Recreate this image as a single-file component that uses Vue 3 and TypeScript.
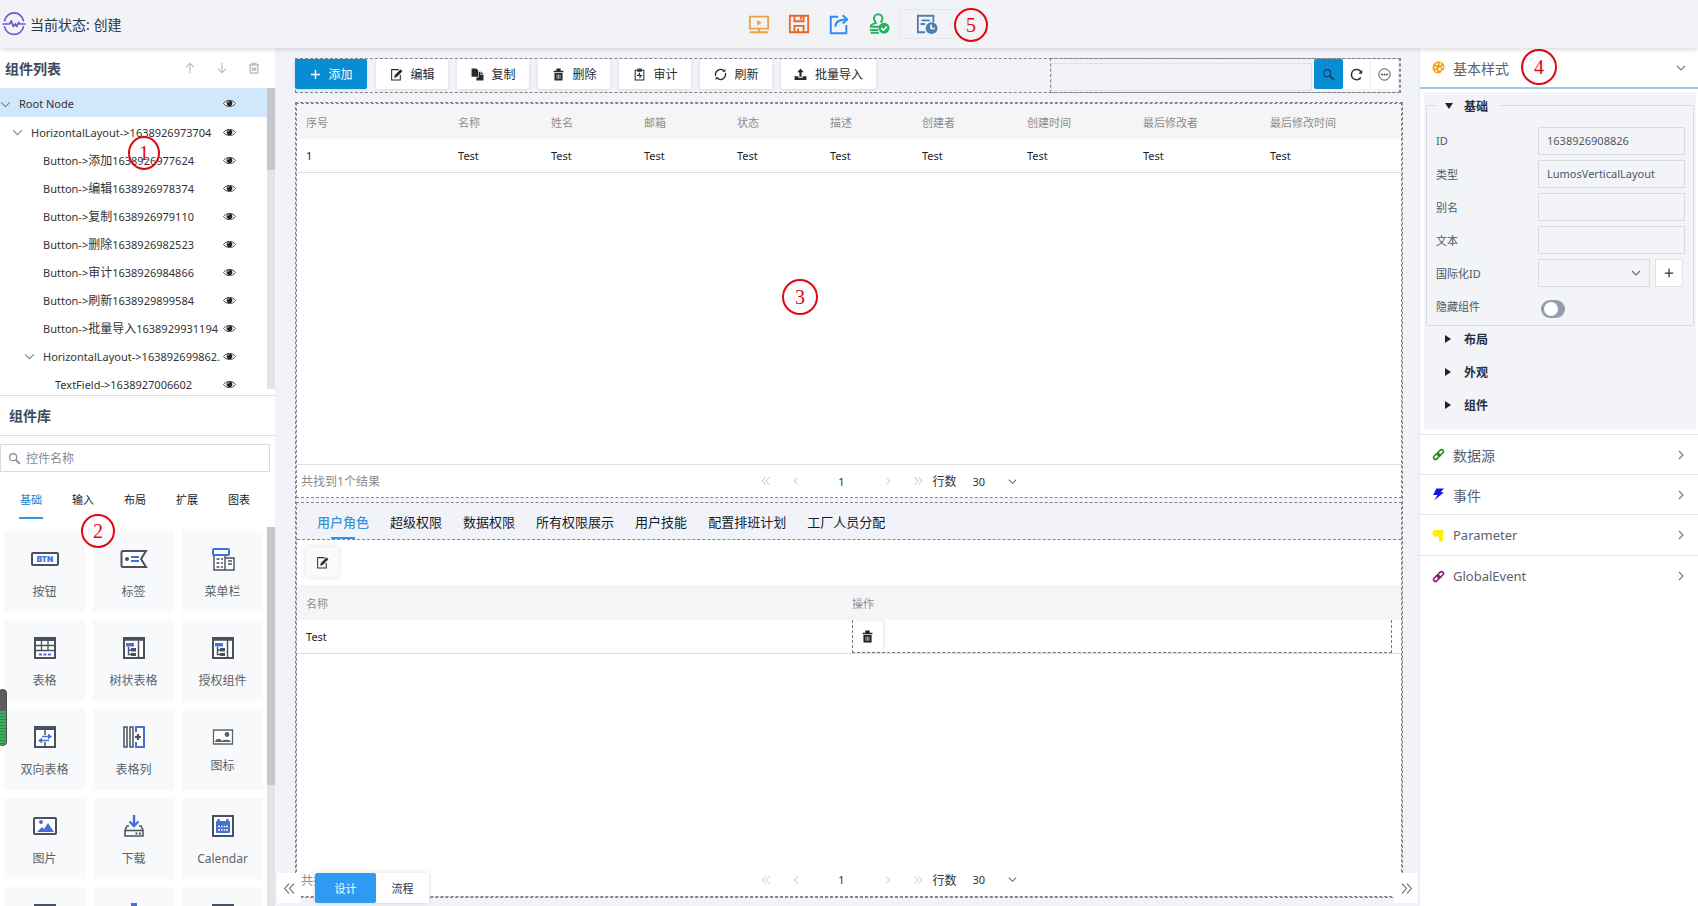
<script setup lang="ts">
import { h, ref } from 'vue'

interface TreeNode { level: number; kind: string; name?: string; id?: string; open?: boolean }
interface Tile { icon: string; label: string; small?: boolean }

const dark = '#4a5060'
const blue = '#4470d8'

const shapes: Record<string, string> = {
  logo: `<g fill="none" stroke="#7157cc" stroke-width="1.7" stroke-linecap="round" stroke-linejoin="round"><path d="M2.6 8.6a9.6 9.6 0 0 1 18.8 0M2.6 14.8a9.6 9.6 0 0 0 18.8 0"/><path d="M1 12h6.5l1.8-3 2 5.500 2-2.500 1.500 2.500 1.800-4 1.200 1.500h5.200"/></g>`,
  play: `<g fill="none" stroke="#eda23d" stroke-width="2"><path d="M2 4h20v13H2zM12 17v4M2 21h20"/></g><path d="M10 7.500l5 3.200-5 3.200z" fill="#eda23d"/>`,
  save: `<g fill="none" stroke="#e8672a" stroke-width="2"><path d="M2 3h20v18H2zM7 3v6h10V3M7 21v-7h10v7M14 4v3M11 17v4"/></g>`,
  share: `<g fill="none" stroke="#2b8cf4" stroke-width="2.100"><path d="M11 4H3v18h17v-9"/><path d="M8 15c0-5 4-8 12-8M16 2.500L21 7l-5 4.500" stroke-linejoin="round"/></g>`,
  stamp: `<g fill="none" stroke="#25b562" stroke-width="2.200"><path d="M13 15H3c0-3 3-3.500 5.500-4C8.500 9 6.500 8.500 6.500 6a4.600 4.600 0 0 1 9.200 0c0 2-1.200 3-1.600 4.500M2 18.500h9M3 21.500h9"/></g><circle cx="17.500" cy="16.500" r="6" fill="#25b562"/><path d="M14.500 16.500l2.200 2.200 4-4" fill="none" stroke="#fff" stroke-width="1.600"/>`,
  history: `<g fill="none" stroke="#4d7fb2" stroke-width="2"><path d="M10 21H2V3h17v7M6 8h9M5 12h5"/></g><circle cx="17" cy="16.500" r="6.500" fill="#4d7fb2"/><path d="M16.500 12.500v4.500h4" fill="none" stroke="#fff" stroke-width="1.700"/>`,
  up: `<path d="M12 21V4M5 11l7-7 7 7" fill="none" stroke="currentColor" stroke-width="2"/>`,
  down: `<path d="M12 3v17M5 13l7 7 7-7" fill="none" stroke="currentColor" stroke-width="2"/>`,
  trash: `<path d="M3 5h18v3H3zM8 1h8v4H8zM4.500 9h15v14h-15z" fill="currentColor"/><path d="M9.200 12v8M12 12v8M14.800 12v8" stroke="#fff" stroke-width="1.200"/>`,
  trashLine: `<path d="M2 6h20M8 6V3h8v3M4.500 7v15h15V7M9 11v7M15 11v7M12 11v7" fill="none" stroke="currentColor" stroke-width="2.800"/>`,
  chevronDown: `<path d="M4 8l8 8 8-8" fill="none" stroke="currentColor" stroke-width="2.200"/>`,
  chevronRight: `<path d="M8 4l8 8-8 8" fill="none" stroke="currentColor" stroke-width="2.200"/>`,
  chevronLeft: `<path d="M16 4l-8 8 8 8" fill="none" stroke="currentColor" stroke-width="2.200"/>`,
  doubleLeft: `<path d="M11 3l-8 9 8 9M20 3l-8 9 8 9" fill="none" stroke="currentColor" stroke-width="2"/>`,
  doubleRight: `<path d="M4 3l8 9-8 9M13 3l8 9-8 9" fill="none" stroke="currentColor" stroke-width="2"/>`,
  eye: `<path d="M1 12C6 4.500 18 4.500 23 12 18 19.500 6 19.500 1 12z" fill="#fff" stroke="currentColor" stroke-width="1.500"/><circle cx="12" cy="11.500" r="5.200" fill="currentColor"/><path d="M9 11a3.500 3.500 0 0 1 3-3" stroke="#fff" stroke-width="1.300" fill="none"/>`,
  search: `<circle cx="9.500" cy="9.500" r="6.500" fill="none" stroke="currentColor" stroke-width="2.200"/><path d="M14 14l8 8" stroke="currentColor" stroke-width="3.200"/>`,
  plus: `<path d="M12 2v20M2 12h20" stroke="currentColor" stroke-width="3"/>`,
  edit: `<path d="M19 13v9H3V3h13" fill="none" stroke="currentColor" stroke-width="1.900"/><path d="M7.500 18l1.500-5L19.500 2.500l3.500 3.500L12.500 16.500z" fill="currentColor"/>`,
  copy: `<path d="M1 1h9l3 3v12H1z" fill="currentColor"/><path d="M14 7h4.500L23 11v12H10v-5.500h4z" fill="currentColor"/><path d="M18 7v5h5" fill="none" stroke="#fff" stroke-width="1.200"/>`,
  audit: `<path d="M4 4h16v18H4zM9 2h6v4H9zM7 14h3l2-5 1 8 1.500-3H17" fill="none" stroke="currentColor" stroke-width="1.900"/>`,
  refresh: `<path d="M3.200 15A9.300 9.300 0 0 1 18 5M20.800 9A9.300 9.300 0 0 1 6 19" fill="none" stroke="currentColor" stroke-width="2.400"/><path d="M15 7h6V2zM9 17H3v5z" fill="currentColor"/>`,
  upload: `<path d="M12 1l6 7h-4v8h-4V8H6zM1 15h7v3h8v-3h7v7H1z" fill="currentColor"/>`,
  reload: `<path d="M20 17.500A9.500 9.500 0 1 1 20 7" fill="none" stroke="currentColor" stroke-width="2.800"/><path d="M22.500 3v7.500h-7z" fill="currentColor"/>`,
  more: `<circle cx="12" cy="12" r="10.500" fill="none" stroke="currentColor" stroke-width="1.600"/><path d="M6 12h3M10.500 12h3M15 12h3" stroke="currentColor" stroke-width="2.600"/>`,
  palette: `<path d="M12 1c6 0 11 4 11 10 0 5-3 6-5 7-2 2-1 5-6 5C5 23 1 18 1 12S6 1 12 1z" fill="#f5a21b"/><g fill="#fff"><circle cx="6" cy="12" r="2"/><circle cx="9" cy="6" r="2"/><circle cx="15.500" cy="5.500" r="2"/><circle cx="19" cy="11" r="1.800"/><circle cx="8" cy="18" r="1.800"/><circle cx="14" cy="15" r="2.400"/></g>`,
  link: `<g fill="none" stroke="currentColor" stroke-width="2.800"><rect x="-6.500" y="-3.500" width="13" height="7" rx="3.500" transform="translate(8.500 15.500) rotate(-45)"/><rect x="-6.500" y="-3.500" width="13" height="7" rx="3.500" transform="translate(15.500 8.500) rotate(-45)"/></g>`,
  bolt: `<path d="M8 1h14l-6 7h6L4 23l6-10H2z" fill="#1414e0"/>`,
  paragraph: `<path d="M6 2h16v4h-2v17h-7V14H8a6 6 0 0 1-2-12z" fill="#ffee00"/>`,
  btn: `<rect x="2" y="6" width="26" height="12" rx="1" fill="#fff" stroke="${dark}" stroke-width="2"/><text x="15" y="15" text-anchor="middle" font-family="Inter, sans-serif" font-weight="900" font-size="8" fill="${blue}">BTN</text>`,
  tag: `<path d="M4 4h23l-5 8 5 8H4a1.500 1.500 0 0 1-1.500-1.500v-13A1.500 1.500 0 0 1 4 4z" fill="#fff" stroke="${dark}" stroke-width="2"/><circle cx="8" cy="12" r="2" fill="${dark}"/><path d="M12 10h8M12 14h8" stroke="${blue}" stroke-width="1.800"/>`,
  menu: `<path d="M6 8v15h11V8M17 11h9v12h-9" fill="#fff" stroke="${dark}" stroke-width="1.400"/><rect x="5" y="2" width="16" height="6" rx="1" fill="#fff" stroke="${blue}" stroke-width="2"/><path d="M8.500 12h3M8.500 16h3M8.500 20h3M13 12h2M13 16h2M13 20h2M20 14h4M20 17h4" stroke="${dark}" stroke-width="1.700"/>`,
  table: `<rect x="5" y="2" width="20" height="20" fill="#fff" stroke="${dark}" stroke-width="2"/><path d="M4 3h22" stroke="${dark}" stroke-width="4"/><path d="M5 9.500h20M5 14.500h20M11.500 4v11M18 4v11" stroke="${dark}" stroke-width="1.300"/><path d="M9 18.500h3M13.500 18.500h3M18 18.500h3" stroke="${blue}" stroke-width="2"/>`,
  treeTable: `<rect x="5" y="2" width="20" height="20" fill="#fff" stroke="${dark}" stroke-width="2"/><path d="M4 3h22" stroke="${dark}" stroke-width="3.500"/><path d="M19.500 3v19" stroke="${dark}" stroke-width="1.500"/><path d="M7 7h8v3.500H7z" fill="${blue}"/><path d="M9.500 11v7.500h3M9.500 14h3" fill="none" stroke="${dark}" stroke-width="1.400"/><path d="M12 12h5v3.500h-5zM12 17h5v3h-5z" fill="${dark}"/>`,
  biTable: `<rect x="5" y="2" width="20" height="20" fill="#fff" stroke="${dark}" stroke-width="2"/><path d="M4 3h22" stroke="${dark}" stroke-width="4"/><path d="M15 4v6M15 17v5" stroke="${dark}" stroke-width="1.500"/><path d="M12 11.500h8M10 15.500h9" stroke="${blue}" stroke-width="1.500"/><path d="M18 8.500l4 3-4 3zM12 12.500l-4 3 4 3z" fill="${blue}"/>`,
  columns: `<path d="M5 2h3v20H5zM11 2h3v20h-3z" fill="#fff" stroke="${dark}" stroke-width="1.500"/><path d="M17 7V2h8v20h-8v-5" fill="#fff" stroke="${blue}" stroke-width="2"/><path d="M19 9v6M16 12h6" stroke="${dark}" stroke-width="2.200"/>`,
  picture: `<path d="M5.500 5h19v14h-19z" fill="#fff" stroke="#5b6468" stroke-width="1.300"/><circle cx="19" cy="9.500" r="2.400" fill="#5b6468"/><path d="M7 17c1-4 5-4 7-1 2-2 4-1 4-1 3-1 5 2 5 2z" fill="#5b6468"/>`,
  image: `<rect x="4" y="4" width="22" height="16" rx="1" fill="#fff" stroke="${dark}" stroke-width="2"/><circle cx="11" cy="8" r="2" fill="${blue}"/><path d="M7 18l5-5 2 2 4-6 6 9z" fill="${blue}"/>`,
  download: `<path d="M15 1v10M10.500 7.500L15 12l4.500-4.500" fill="none" stroke="${blue}" stroke-width="2.400"/><path d="M10 12H8l-2 4v6h18v-6l-2-4h-2M6 16.500h18" fill="none" stroke="${dark}" stroke-width="1.500"/><path d="M16.500 19.500h2M20 19.500h2" stroke="${dark}" stroke-width="2"/>`,
  calendar: `<rect x="5" y="2" width="20" height="20" fill="#fff" stroke="${dark}" stroke-width="2"/><rect x="8" y="7" width="14" height="12" rx="1" fill="${blue}"/><path d="M10.500 5v4M19.500 5v4" stroke="${blue}" stroke-width="2.500"/><path d="M10 12.500h2M13 12.500h1.500M15.700 12.500h1.500M18 12.500h2M10 16h2M13 16h1.500M15.700 16h1.500M18 16h2" stroke="#fff" stroke-width="1.600"/>`,
  panel: `<path d="M4 1h22v21H4z" fill="${dark}"/>`,
  pin: `<path d="M12 0h6v4h-6zM10 3h10v3H10z" fill="${blue}"/>`,
}

const Icon = (props: { name: string; w?: number; s?: number }) => {
  const size = props.s ?? 12
  const box = props.w ?? 24
  return h('svg', {
    class: 'icon',
    viewBox: `0 0 ${box} 24`,
    width: Math.round((size * box) / 24),
    height: size,
    'aria-hidden': 'true',
    innerHTML: shapes[props.name],
  })
}
Icon.props = ['name', 'w', 's']

const tree: TreeNode[] = [
  { level: 0, kind: 'Root Node', open: true },
  { level: 1, kind: 'HorizontalLayout->', id: '1638926973704', open: true },
  { level: 2, kind: 'Button->', name: '添加', id: '1638926977624' },
  { level: 2, kind: 'Button->', name: '编辑', id: '1638926978374' },
  { level: 2, kind: 'Button->', name: '复制', id: '1638926979110' },
  { level: 2, kind: 'Button->', name: '删除', id: '1638926982523' },
  { level: 2, kind: 'Button->', name: '审计', id: '1638926984866' },
  { level: 2, kind: 'Button->', name: '刷新', id: '1638929899584' },
  { level: 2, kind: 'Button->', name: '批量导入', id: '1638929931194' },
  { level: 2, kind: 'HorizontalLayout->', id: '163892699862.', open: true },
  { level: 3, kind: 'TextField->', id: '1638927006602' },
]
const libTabs = ['基础', '输入', '布局', '扩展', '图表']
const tiles: Tile[] = [
  { icon: 'btn', label: '按钮' }, { icon: 'tag', label: '标签' }, { icon: 'menu', label: '菜单栏' },
  { icon: 'table', label: '表格' }, { icon: 'treeTable', label: '树状表格' }, { icon: 'treeTable', label: '授权组件' },
  { icon: 'biTable', label: '双向表格' }, { icon: 'columns', label: '表格列' }, { icon: 'picture', label: '图标', small: true },
  { icon: 'image', label: '图片' }, { icon: 'download', label: '下载' }, { icon: 'calendar', label: 'Calendar' },
  { icon: 'panel', label: '' }, { icon: 'pin', label: '' }, { icon: 'panel', label: '' },
]
const actions = [
  { icon: 'plus', label: '添加' }, { icon: 'edit', label: '编辑' }, { icon: 'copy', label: '复制' },
  { icon: 'trash', label: '删除' }, { icon: 'audit', label: '审计' }, { icon: 'refresh', label: '刷新' },
  { icon: 'upload', label: '批量导入' },
]
const columns = [
  { title: '序号', share: 152 }, { title: '名称', share: 93 }, { title: '姓名', share: 93 },
  { title: '邮箱', share: 93 }, { title: '状态', share: 93 }, { title: '描述', share: 92 },
  { title: '创建者', share: 105 }, { title: '创建时间', share: 116 }, { title: '最后修改者', share: 127 },
  { title: '最后修改时间', share: 140 },
]
const total = columns.reduce((sum, c) => sum + c.share, 0)
const roleTabs = ['用户角色', '超级权限', '数据权限', '所有权限展示', '用户技能', '配置排班计划', '工厂人员分配']
const fields = [
  { key: 'id', label: 'ID', value: '1638926908826' },
  { key: 'type', label: '类型', value: 'LumosVerticalLayout' },
  { key: 'alias', label: '别名', value: '' },
  { key: 'text', label: '文本', value: '' },
]
const sections = [
  { icon: 'link', tone: 'green', label: '数据源' },
  { icon: 'bolt', tone: 'blue', label: '事件' },
  { icon: 'paragraph', tone: 'yellow', label: 'Parameter' },
  { icon: 'link', tone: 'purple', label: 'GlobalEvent' },
]
const tools = ['play', 'save', 'share', 'stamp']
const hidden = ref(false)
</script>

<template>
  <div class="designer">
    <header class="topbar">
      <div class="status"><Icon name="logo" :s="24" /><span>当前状态: 创建</span></div>
      <div class="tools">
        <button v-for="t in tools" :key="t" class="tool" :aria-label="t"><Icon :name="t" :s="22" /></button>
        <button class="tool boxed" aria-label="history"><Icon name="history" :s="22" /></button>
      </div>
      <span class="mark mark-5">5</span>
    </header>

    <div class="body">
      <aside class="left">
        <section class="tree-panel">
          <div class="tree-head">
            <h2>组件列表</h2>
            <button aria-label="up"><Icon name="up" :s="14" /></button>
            <button aria-label="down"><Icon name="down" :s="14" /></button>
            <button aria-label="delete"><Icon name="trashLine" :s="12" /></button>
          </div>
          <div class="tree-scroll">
            <ul class="tree">
              <li v-for="(n, i) in tree" :key="i" :class="['lv' + n.level, { selected: i === 0 }]">
                <button class="twist" aria-label="toggle"><Icon v-if="n.open" name="chevronDown" :s="13" /></button>
                <span class="label">{{ n.kind }}<b v-if="n.name">{{ n.name }}</b>{{ n.id }}</span>
                <button class="eye" aria-label="visible"><Icon name="eye" :s="13" /></button>
              </li>
            </ul>
            <div class="track"><div class="thumb tree-thumb"></div></div>
          </div>
          <span class="mark mark-1">1</span>
        </section>

        <h2 class="lib-head">组件库</h2>
        <label class="lib-search"><Icon name="search" :s="13" /><input type="text" placeholder="控件名称" aria-label="控件名称" /></label>
        <nav class="lib-tabs">
          <button v-for="(t, i) in libTabs" :key="t" :class="{ active: i === 0 }">{{ t }}</button>
        </nav>
        <div class="lib-scroll">
          <div class="tiles">
            <button v-for="(t, i) in tiles" :key="i" class="tile" :class="{ small: t.small }">
              <Icon :name="t.icon" :w="30" :s="24" /><span>{{ t.label }}</span>
            </button>
          </div>
          <div class="track"><div class="thumb lib-thumb"></div></div>
          <span class="mark mark-2">2</span>
        </div>
        <div class="gauge"></div>
      </aside>

      <main class="canvas">
        <div class="toolbar">
          <div class="actions">
            <button v-for="(a, i) in actions" :key="a.label" class="action" :class="{ primary: i === 0 }">
              <Icon :name="a.icon" :s="i === 0 ? 11 : 13" />{{ a.label }}
            </button>
          </div>
          <div class="query">
            <input type="text" aria-label="search" />
            <button class="go" aria-label="search"><Icon name="search" :s="13" /></button>
            <button aria-label="reload"><Icon name="reload" :s="13" /></button>
            <button aria-label="more"><Icon name="more" :s="13" /></button>
          </div>
        </div>

        <div class="stage">
          <section class="grid-panel">
            <table class="grid">
              <colgroup><col v-for="c in columns" :key="c.title" :style="{ width: (c.share / total) * 100 + '%' }" /></colgroup>
              <thead><tr><th v-for="c in columns" :key="c.title">{{ c.title }}</th></tr></thead>
              <tbody><tr><td v-for="(c, i) in columns" :key="c.title">{{ i === 0 ? '1' : 'Test' }}</td></tr></tbody>
            </table>
            <div class="pager ruled">
              <span class="found">共找到1个结果</span>
              <div class="pages">
                <button aria-label="first"><Icon name="doubleLeft" :s="10" /></button>
                <button aria-label="previous"><Icon name="chevronLeft" :s="10" /></button>
                <span class="page">1</span>
                <button aria-label="next"><Icon name="chevronRight" :s="10" /></button>
                <button aria-label="last"><Icon name="doubleRight" :s="10" /></button>
                <label for="rows-a">行数</label>
                <span class="rows"><select id="rows-a"><option>30</option></select><Icon name="chevronDown" :s="11" /></span>
              </div>
            </div>
            <span class="mark mark-3">3</span>
          </section>

          <section class="roles">
            <nav class="role-tabs">
              <button v-for="(t, i) in roleTabs" :key="t" :class="{ active: i === 0 }">{{ t }}</button>
            </nav>
            <div class="role-body">
              <div class="role-tools"><button aria-label="edit"><Icon name="edit" :s="13" /></button></div>
              <table class="grid">
                <thead><tr><th>名称</th><th class="ops-head">操作</th></tr></thead>
                <tbody><tr><td>Test</td><td class="ops"><div><button aria-label="delete"><Icon name="trash" :s="13" /></button></div></td></tr></tbody>
              </table>
              <div class="pager">
                <span class="found">共找到1个结果</span>
                <div class="pages">
                  <button aria-label="first"><Icon name="doubleLeft" :s="10" /></button>
                  <button aria-label="previous"><Icon name="chevronLeft" :s="10" /></button>
                  <span class="page">1</span>
                  <button aria-label="next"><Icon name="chevronRight" :s="10" /></button>
                  <button aria-label="last"><Icon name="doubleRight" :s="10" /></button>
                  <label for="rows-b">行数</label>
                  <span class="rows"><select id="rows-b"><option>30</option></select><Icon name="chevronDown" :s="11" /></span>
                </div>
              </div>
            </div>
          </section>
        </div>

        <button class="fold fold-left" aria-label="collapse left"><Icon name="doubleLeft" :s="13" /></button>
        <div class="modes"><button class="active">设计</button><button>流程</button></div>
        <button class="fold fold-right" aria-label="collapse right"><Icon name="doubleRight" :s="13" /></button>
      </main>

      <aside class="right">
        <button class="section open"><Icon name="palette" :s="13" /><span>基本样式</span><Icon name="chevronDown" :s="12" class="arrow" /></button>
        <span class="mark mark-4">4</span>
        <div class="props">
          <fieldset>
            <legend><button class="group open">基础</button></legend>
            <div v-for="f in fields" :key="f.key" class="field">
              <label :for="f.key">{{ f.label }}</label>
              <input :id="f.key" type="text" :value="f.value" />
            </div>
            <div class="field">
              <label for="i18n">国际化ID</label>
              <span class="pick"><select id="i18n"><option></option></select><Icon name="chevronDown" :s="12" /></span>
              <button class="add" aria-label="add"><Icon name="plus" :s="10" /></button>
            </div>
            <div class="field">
              <label for="hide">隐藏组件</label>
              <input id="hide" v-model="hidden" type="checkbox" class="switch" />
            </div>
          </fieldset>
          <button class="group">布局</button>
          <button class="group">外观</button>
          <button class="group">组件</button>
        </div>
        <button v-for="s in sections" :key="s.label" class="section" :class="s.tone">
          <Icon :name="s.icon" :s="13" /><span>{{ s.label }}</span><Icon name="chevronRight" :s="12" class="arrow" />
        </button>
      </aside>
    </div>
  </div>
</template>

<style>
html, body { margin: 0; }
</style>

<style scoped>
.designer {
  display: flex;
  flex-direction: column;
  height: 100vh;
  overflow: hidden;
  background: #f2f3f8;
  color: #333;
  font-family: "Noto Sans", "Noto Sans CJK SC", sans-serif;
  font-size: 12px;
}
.designer * { box-sizing: border-box; }
button, input, select { font: inherit; color: inherit; margin: 0; }
button { display: flex; align-items: center; justify-content: center; padding: 0; border: 0; background: none; white-space: nowrap; }
.icon { flex: none; display: block; }
h2 { margin: 0; font-size: 14px; font-weight: 700; color: #3c4a5a; }

.topbar {
  position: relative;
  z-index: 2;
  display: grid;
  grid-template-columns: 1fr auto 1fr;
  flex: none;
  height: 48px;
  background: #f2f3f7;
  box-shadow: 0 1px 5px rgba(0, 0, 0, .18);
}
.status { display: flex; align-items: center; gap: 4px; padding-left: 2px; font-size: 14px; color: #2b3446; }
.tools { display: flex; align-items: center; gap: 18px; padding-left: 12px; padding-bottom: 1px; }
.tool { width: 22px; height: 30px; }
.tool.boxed { width: 64px; margin-left: -9px; padding-right: 8px; border: 1px solid #e4e7ec; border-right: 0; }

.mark {
  position: absolute;
  display: flex;
  align-items: center;
  justify-content: center;
  width: 34px;
  height: 34px;
  border: 2px solid #e30613;
  border-radius: 50%;
  color: #e30613;
  font-family: "Liberation Serif", serif;
  font-size: 20px;
}
.mark-5 { left: calc(50% + 105px); top: 8px; }
.mark-1 { left: 128px; top: 88px; width: 32px; height: 34px; }
.mark-2 { left: 81px; top: -13px; }
.mark-3 { left: calc(50% - 67px); top: 175px; width: 36px; height: 36px; }
.mark-4 { left: 101px; top: 1px; width: 36px; height: 36px; }

.body { display: flex; flex: 1; min-height: 0; }

.left { position: relative; display: flex; flex-direction: column; flex: 0 0 275px; background: #fff; }
.tree-panel { position: relative; flex: none; padding-bottom: 6px; border-bottom: 1px solid #dcdfe6; }
.tree-head { display: flex; align-items: center; height: 40px; padding-left: 5px; padding-right: 5px; }
.tree-head h2 { flex: 1; }
.tree-head button { width: 32px; height: 24px; color: #b9bdc4; }
.tree-scroll { display: flex; height: 301px; overflow: hidden; }
.tree { flex: 1; margin: 0; padding: 0; list-style: none; font-size: 11px; }
.tree li { display: flex; align-items: center; height: 28px; }
.tree li.selected { background: #d0e7fc; height: 29px; padding-top: 2px; }
.tree li + li { padding-top: 2px; }
.tree b { font-size: 12px; font-weight: 400; }
.lv1 { padding-left: 12px; }
.lv2 { padding-left: 24px; }
.lv3 { padding-left: 36px; }
.twist { width: 12px; height: 20px; margin-right: 7px; padding: 1px 2px 0 0; color: #808894; flex: none; }
.label { flex: 1; min-width: 0; overflow: hidden; white-space: nowrap; }
.eye { flex: none; width: 13px; margin: 0 31px 0 3px; color: #222; }
.track { flex: none; width: 8px; background: #e3e4e8; }
.thumb { background: #c6c7ca; }
.tree-thumb { height: 82px; }
.lib-thumb { height: 258px; }

.lib-head { flex: none; height: 39px; padding-left: 9px; line-height: 40px; border-bottom: 1px solid #dcdfe6; box-sizing: content-box; }
.lib-search { display: flex; flex: none; align-items: center; gap: 5px; width: 270px; height: 28px; margin-top: 8px; padding-left: 7px; border: 1px solid #d9dbe0; color: #858b94; }
.lib-search input { flex: 1; min-width: 0; border: 0; outline: 0; padding: 0; background: none; }
.lib-search input::placeholder { color: #858b94; opacity: 1; }
.lib-tabs { display: flex; flex: none; gap: 28px; height: 55px; padding: 13px 0 0 19px; font-size: 11px; color: #111c2c; }
.lib-tabs button { width: 24px; height: 34px; padding-bottom: 7px; }
.lib-tabs button.active { color: #3a94dc; border-bottom: 2px solid #3a94dc; font-weight: 500; padding-top: 2px; }
.lib-scroll { position: relative; display: flex; flex: 1; min-height: 0; }
.tiles { flex: 1; display: grid; grid-template-columns: repeat(3, 1fr); grid-auto-rows: 81px; gap: 8px; padding: 4px 4px 0; overflow: hidden; }
.tile { flex-direction: column; justify-content: flex-start; gap: 12px; padding-top: 16px; background: #f8f9fb; color: #5a646c; line-height: 18px; }
.tile.small { gap: 8px; padding-top: 16px; }
.gauge {
  position: absolute;
  left: -2px;
  bottom: 160px;
  width: 9px;
  height: 57px;
  border: 1px solid #4c5350;
  border-radius: 4px;
  background: linear-gradient(#5a5c60 38%, transparent 38%), repeating-linear-gradient(#3fae5c 0 2px, #2f8a48 2px 3px);
}

.canvas { position: relative; display: flex; flex-direction: column; flex: 1; min-width: 0; padding: 10px 17px 8px 20px; }
.toolbar { display: flex; flex: none; justify-content: space-between; height: 35px; margin-right: 2px; border: 1px dashed #85878c; }
.actions { display: flex; gap: 9px; align-items: flex-start; margin-left: -1px; }
.action { gap: 8px; min-width: 72px; height: 30px; padding: 0 13px; background: #fff; border-radius: 2px; box-shadow: 0 1px 4px rgba(0, 0, 0, .1); color: #262a30; }
.action.primary { background: #068dd4; color: #fff; }
.query { display: flex; width: 350px; margin: -1px 0; border: 1px dashed #85878c; }
.query input { flex: 1; min-width: 0; height: 28px; margin: 4px 2px 0 0; border: 1px solid #dfe1e7; background: none; }
.query button { width: 28px; height: 30px; background: #fff; border-right: 1px solid #eee; color: #333; }
.query .go { width: 29px; background: #068dd4; border: 0; border-radius: 2px; color: #0b4266; }

.stage { display: flex; flex-direction: column; flex: 1; min-height: 0; gap: 4px; margin-top: 9px; border: 1px dashed #85878c; }
.grid-panel { position: relative; display: flex; flex-direction: column; flex: 1 1 0; min-height: 0; border: 1px dashed #85878c; background: #fff; }
.grid { width: 100%; table-layout: fixed; border-collapse: collapse; }
.grid th, .grid td { padding: 2px 9px 0; text-align: left; font-size: 11px; line-height: 16px; }
.grid th { height: 35px; background: #f5f5f5; color: #8d8d8d; font-weight: 400; }
.grid td { height: 33px; border-bottom: 1px solid #dcdde0; color: #1e1e1e; }
.pager { position: relative; display: flex; align-items: center; justify-content: center; height: 33px; margin-top: auto; }
.pager.ruled { border-top: 1px solid #dcdde0; }
.found { position: absolute; left: 4px; color: #8c8c8c; }
.pages { display: flex; align-items: center; padding-left: 70px; }
.pages button { width: 30px; height: 24px; color: #b3b6bb; }
.page { width: 62px; text-align: center; font-size: 11px; }
.rows { display: flex; align-items: center; margin-left: 16px; }
.rows select { width: 34px; appearance: none; border: 0; background: none; padding: 0; font-size: 11px; }
.rows .icon { color: #666; }

.roles { display: flex; flex-direction: column; flex: 1 1 2px; min-height: 0; border: 1px dashed #85878c; }
.role-tabs { display: flex; flex: none; gap: 21px; height: 37px; padding-left: 20px; border-bottom: 1px dashed #85878c; font-size: 13px; color: #111c2c; }
.role-tabs button { position: relative; }
.role-tabs .active { color: #3a94dc; font-weight: 500; }
.role-tabs .active::after { content: ""; position: absolute; left: calc(50% - 12px); bottom: 0; width: 24px; height: 2px; background: #3a94dc; }
.role-body { display: flex; flex-direction: column; flex: 1; min-height: 0; background: #fff; }
.role-tools { flex: none; padding: 7px 9px 8px; }
.role-tools button { width: 33px; height: 30px; background: #fafafa; box-shadow: 0 0 5px rgba(0, 0, 0, .12); }
.grid .ops-head { padding-left: 3px; }
.grid .ops { padding: 0 9px 0 3px; vertical-align: top; }
.ops div { height: 33px; margin-bottom: -1px; padding: 2px 2px 0; border: 1px dashed #77797e; border-top: 0; }
.ops button { width: 28px; height: 29px; padding-right: 4px; box-shadow: 1px 0 4px rgba(0, 0, 0, .12); }

.fold { position: absolute; bottom: 3px; height: 30px; background: #fff; color: #666; }
.fold-left { left: 2px; width: 24px; }
.fold-right { right: 2px; width: 24px; }
.modes { position: absolute; left: 40px; bottom: 3px; display: flex; height: 30px; background: #fff; box-shadow: 0 0 5px rgba(0, 0, 0, .15); font-size: 11px; }
.modes button { width: 53px; }
.modes .active { width: 61px; background: #2e9af2; color: #fff; border-radius: 2px; }

.right { position: relative; flex: 0 0 278px; background: #fff; box-shadow: -1px 0 3px rgba(0, 0, 0, .04); }
.section { width: 100%; height: 40px; padding: 0 11px 0 12px; gap: 8px; border-top: 1px solid #e3e5e9; font-size: 14px; color: #5a6170; }
.section span { flex: 1; text-align: left; }
.section.open { height: 41px; border-top: 0; border-bottom: 2px solid #9dcbee; }
.section .arrow { color: #757b85; }
.section.yellow, .section.purple { font-size: 13px; height: 41px; }
.green .icon:first-child { color: #1c8a1c; }
.purple .icon:first-child { color: #80177f; }
.props { margin: 3px 2px 5px 4px; padding-bottom: 8px; background: #f3f4f7; }
fieldset { margin: 0 2px -4px; padding: 5px 8px 3px 9px; border: 1px solid #d9dbe2; min-width: 0; }
legend { padding: 0 12px 0 0; margin-left: 0; }
.group { justify-content: flex-start; height: 33px; padding-left: 21px; font-weight: 700; font-size: 12px; color: #27303e; }
.group::before { content: ""; width: 0; margin-right: 13px; border: 4px solid transparent; border-left: 6px solid #222; border-right: 0; }
legend .group { height: 27px; padding-left: 9px; }
.group.open::before { border: 4px solid transparent; border-top: 6px solid #222; border-bottom: 0; margin-right: 11px; }
.field { display: flex; align-items: center; height: 33px; font-size: 11px; color: #4e5868; }
.field label { flex: 1; }
.field input[type="text"] { width: 147px; height: 28px; padding: 0 8px; border: 1px solid #d9dbe2; background: none; outline: 0; }
.pick { position: relative; display: flex; width: 112px; height: 28px; }
.pick select { width: 100%; appearance: none; border: 1px solid #d9dbe2; background: none; border-radius: 0; }
.pick .icon { position: absolute; right: 8px; top: 8px; color: #666; pointer-events: none; }
.add { width: 28px; height: 28px; margin: 0 2px 0 5px; background: #fff; border: 1px solid #e1e3e8; color: #333; }
.field .switch { position: relative; appearance: none; width: 24px; height: 18px; margin: 6px 120px 0 0; border-radius: 9px; background: #949dab; }
.switch::after { content: ""; position: absolute; left: 3px; top: 2px; width: 14px; height: 14px; border-radius: 50%; background: #fff; }
</style>
